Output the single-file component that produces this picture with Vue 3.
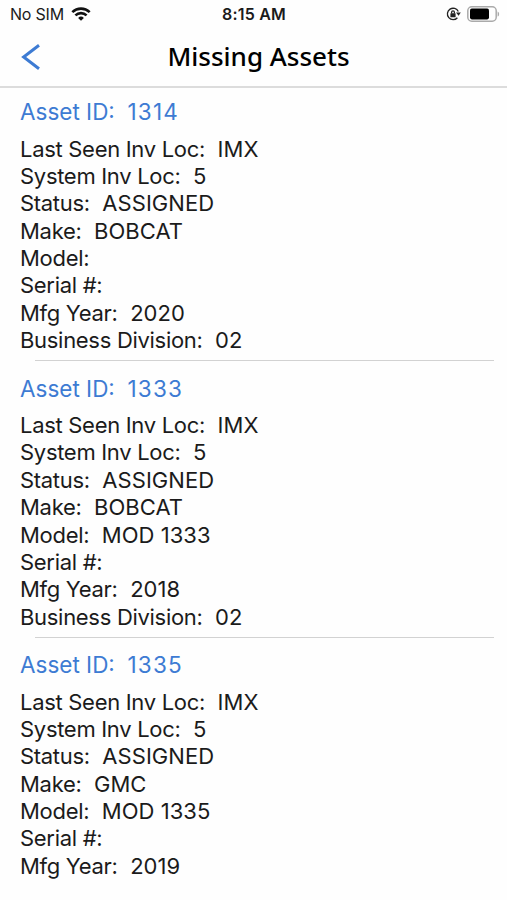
<template>
  <div class="screen">
    <div class="status-bar">
      <div class="carrier">
        <span>No SIM</span>
        <svg class="wifi" viewBox="0 0 20 14">
          <path d="M1.3 5.1a12.7 12.7 0 0 1 17.4 0" />
          <path d="M4.4 8.4a8.1 8.1 0 0 1 11.2 0" />
          <path class="dot" d="M10 13.8 7.1 10.9a4.2 4.2 0 0 1 5.8 0z" />
        </svg>
      </div>
      <div class="clock">8:15 AM</div>
      <div class="indicators">
        <svg class="lock" viewBox="0 0 15 14">
          <path d="M11.4 10.7A5.7 5.7 0 1 1 12.3 4.6" />
          <path class="solid" d="M10 5.4h4.8l-2.2 3.4z" />
          <rect class="solid" x="4.4" y="6.3" width="5.2" height="4" rx=".5" />
          <path class="shackle" d="M5.6 6.5V5.2a1.4 1.4 0 0 1 2.8 0v1.3" />
        </svg>
        <svg class="battery" viewBox="0 0 33 16">
          <rect class="shell" x=".8" y=".8" width="28.4" height="14.4" rx="4" />
          <rect x="3" y="2.6" width="19" height="10.8" rx="1.8" />
          <path class="cap" d="M30.6 5.4c2 .8 2 4.4 0 5.2z" />
        </svg>
      </div>
    </div>

    <div class="nav-bar">
      <button class="back" aria-label="Back">
        <svg viewBox="0 0 20 28">
          <path d="M18 2.2 2.6 14 18 25.8" />
        </svg>
      </button>
      <div class="title">Missing Assets</div>
    </div>

    <div class="list">
      <div v-for="asset in assets" :key="asset.id" class="asset">
        <div class="asset-id">Asset ID:&nbsp; <span class="number">{{ asset.id }}</span></div>
        <div v-for="field in asset.fields" :key="field[0]" class="row">
          <span class="label">{{ field[0] }}:</span>
          <span class="value">{{ field[1] }}</span>
        </div>
      </div>
    </div>
  </div>
</template>

<script setup>
const assets = [
  {
    id: '1314',
    fields: [
      ['Last Seen Inv Loc', 'IMX'],
      ['System Inv Loc', '5'],
      ['Status', 'ASSIGNED'],
      ['Make', 'BOBCAT'],
      ['Model', ''],
      ['Serial #', ''],
      ['Mfg Year', '2020'],
      ['Business Division', '02']
    ]
  },
  {
    id: '1333',
    fields: [
      ['Last Seen Inv Loc', 'IMX'],
      ['System Inv Loc', '5'],
      ['Status', 'ASSIGNED'],
      ['Make', 'BOBCAT'],
      ['Model', 'MOD 1333'],
      ['Serial #', ''],
      ['Mfg Year', '2018'],
      ['Business Division', '02']
    ]
  },
  {
    id: '1335',
    fields: [
      ['Last Seen Inv Loc', 'IMX'],
      ['System Inv Loc', '5'],
      ['Status', 'ASSIGNED'],
      ['Make', 'GMC'],
      ['Model', 'MOD 1335'],
      ['Serial #', ''],
      ['Mfg Year', '2019']
    ]
  }
]
</script>

<style>
body {
  margin: 0;
  background: #fefefe;
}
</style>

<style scoped>
.screen {
  height: 900px;
  overflow: hidden;
  display: flex;
  flex-direction: column;
  background: #fefefe;
  color: #1b1b1b;
  font-family: Inter, "Liberation Sans", sans-serif;
}

.status-bar {
  height: 28px;
  flex-shrink: 0;
  box-sizing: border-box;
  padding: 0 7px 0 10px;
  display: grid;
  grid-template-columns: 1fr auto 1fr;
  align-items: center;
  font-size: 16px;
}

.carrier {
  display: flex;
  align-items: center;
  gap: 7px;
  letter-spacing: -0.2px;
}

.wifi {
  width: 20px;
  height: 14px;
  fill: none;
  stroke: #111;
  stroke-width: 2.6;
}

.wifi .dot {
  fill: #111;
  stroke: none;
}

.clock {
  margin-right: 2px;
  font-weight: 600;
  letter-spacing: 0.2px;
}

.indicators {
  display: flex;
  align-items: center;
  justify-content: flex-end;
  gap: 6px;
}

.lock {
  width: 15px;
  height: 14px;
  fill: none;
  stroke: #222;
  stroke-width: 1.3;
}

.lock .solid {
  fill: #222;
  stroke: none;
}

.battery {
  width: 33px;
  height: 16px;
  fill: #000;
}

.battery .shell {
  fill: none;
  stroke: #aaa;
  stroke-width: 1.5;
}

.battery .cap {
  fill: #aaa;
}

.nav-bar {
  height: 60px;
  flex-shrink: 0;
  box-sizing: border-box;
  padding: 0 21px 1px;
  display: grid;
  grid-template-columns: 1fr auto 1fr;
  align-items: center;
  border-bottom: 2px solid #dcdcdc;
}

.back {
  width: 20px;
  height: 28px;
  padding: 0;
  border: 0;
  background: none;
}

.back svg {
  display: block;
  width: 20px;
  height: 28px;
  fill: none;
  stroke: #3d7bd3;
  stroke-width: 3;
}

.title {
  margin-left: 10px;
  padding-bottom: 2px;
  color: #000;
  font-family: "Noto Sans", "Open Sans", sans-serif;
  font-size: 26px;
  font-weight: 500;
}

.list {
  padding: 10px 13px 0 20px;
}

.asset {
  height: 276.5px;
  box-sizing: border-box;
  position: relative;
}

.asset:not(:last-child)::after {
  content: "";
  position: absolute;
  left: 15px;
  right: 0;
  bottom: 13.5px;
  height: 1px;
  background: #d2d2d2;
}

.asset-id {
  height: 37.5px;
  line-height: 28px;
  color: #3d7bd3;
  font-size: 22.5px;
}

.number {
  letter-spacing: 1.2px;
}

.row {
  height: 27.4px;
  line-height: 27.4px;
  display: flex;
  gap: 12.5px;
  font-size: 22px;
  white-space: nowrap;
}

.label {
  letter-spacing: -0.3px;
}

.value {
  letter-spacing: 0.05px;
}
</style>
